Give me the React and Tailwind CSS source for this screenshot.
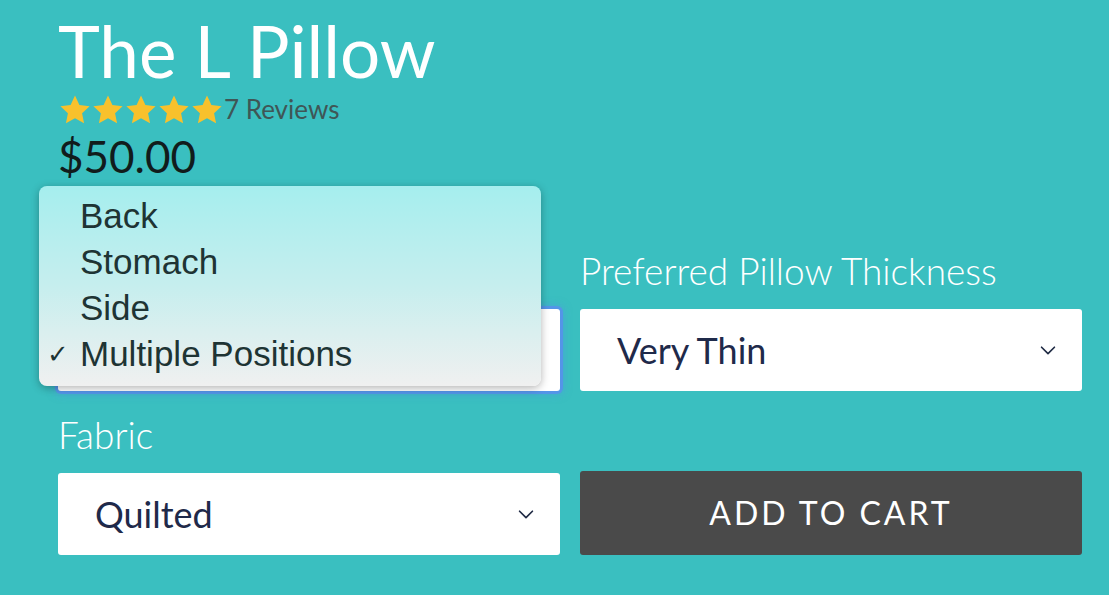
import React from "react";

const Star = () => (
  <svg viewBox="0 0 24 24" className="w-[34px] h-[34px] -mr-[1px]" fill="#f8c12c">
    <path d="M12 1.8l3.1 6.6 7.2.9-5.3 5 1.4 7.1L12 17.9l-6.4 3.5 1.4-7.1-5.3-5 7.2-.9z" />
  </svg>
);

const Chevron = () => (
  <svg viewBox="0 0 24 24" className="w-[22px] h-[22px]" fill="none" stroke="#1f2a44" strokeWidth="1.8" strokeLinecap="round" strokeLinejoin="round">
    <path d="M5 9l7 7 7-7" />
  </svg>
);

const Select = ({ value, focused }) => (
  <div
    className={`h-[82px] bg-white rounded-[3px] flex items-center justify-between pl-[37px] pr-[23px] ${
      focused ? "shadow-[0_0_0_3px_rgba(90,140,240,0.75),0_0_8px_3px_rgba(90,140,240,0.5)]" : ""
    }`}
  >
    <span className="text-[36px] text-[#1f2a4a]">{value}</span>
    <Chevron />
  </div>
);

const options = ["Back", "Stomach", "Side", "Multiple Positions"];

export default function App() {
  return (
    <div
      className="w-[1109px] h-[595px] bg-[#3abfc0] overflow-hidden pl-[58px] pr-[27px] pt-[10px]"
      style={{ fontFamily: "Lato, 'Open Sans', sans-serif" }}
    >
      <h1 className="text-[71px] leading-[82px] text-white">The L Pillow</h1>
      <div className="flex items-center -mt-[2px]">
        <div className="flex">
          {[0, 1, 2, 3, 4].map((i) => (
            <Star key={i} />
          ))}
        </div>
        <span className="text-[26px] text-[#3f5656] ml-[1px]">7 Reviews</span>
      </div>
      <div className="text-[44px] leading-[50px] text-[#111c1c] mt-[2px]">$50.00</div>

      <div className="grid grid-cols-2 gap-x-[20px] mt-[70px]">
        <div className="relative">
          <div className="text-[37px] leading-[40px] font-light text-white mb-[18px]">Sleeping Position</div>
          <Select value="Multiple Positions" focused />
          <div
            className="absolute left-[-19px] top-[-65px] w-[502px] h-[200px] rounded-[8px] bg-gradient-to-b from-[#a5eeee] via-[#c6eeee] to-[#f0f0f0] shadow-[0_2px_8px_rgba(0,0,0,0.3)] pt-[7px] z-10"
            style={{ fontFamily: "'Liberation Sans', Arial, sans-serif" }}
          >
            {options.map((o, i) => (
              <div key={o} className="relative h-[46px] flex items-center pl-[41px] text-[35px] text-[#1e3434]">
                {i === 3 && <span className="absolute left-[8px] text-[26px]">✓</span>}
                {o}
              </div>
            ))}
          </div>
        </div>
        <div>
          <div className="text-[37px] leading-[40px] font-light text-white mb-[18px]">Preferred Pillow Thickness</div>
          <Select value="Very Thin" />
        </div>
        <div className="mt-[24px]">
          <div className="text-[37px] leading-[40px] font-light text-white mb-[18px]">Fabric</div>
          <Select value="Quilted" />
        </div>
        <div className="mt-[24px] flex flex-col justify-end">
          <button className="h-[84px] bg-[#4a4a4a] rounded-[3px] text-white text-[32px] tracking-[3px]">
            ADD TO CART
          </button>
        </div>
      </div>
    </div>
  );
}
